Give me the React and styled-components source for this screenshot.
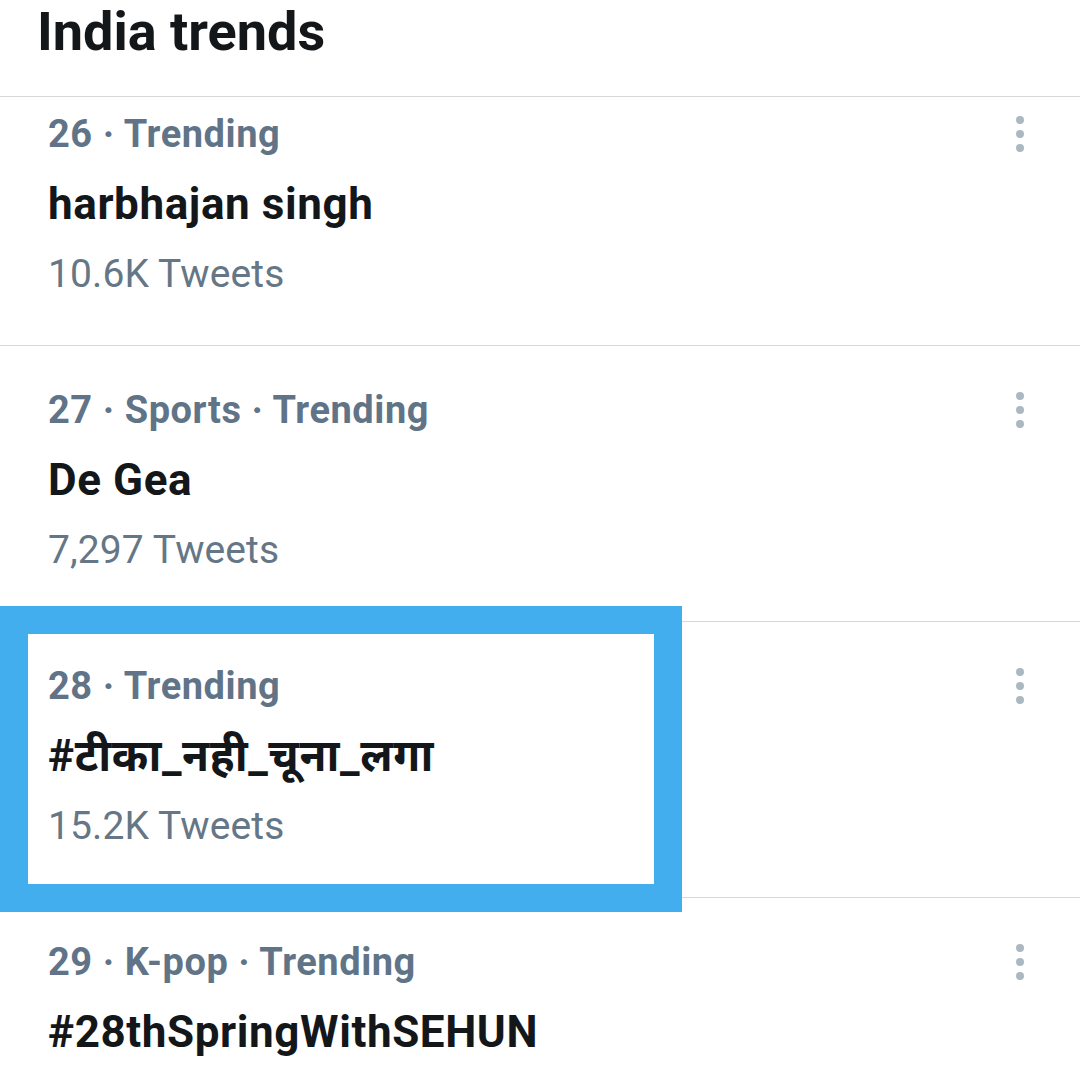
import React from 'react';
import styled, {createGlobalStyle} from 'styled-components';

const GlobalStyle = createGlobalStyle`
  html, body {
    margin: 0;
    padding: 0;
    background: #ffffff;
  }
  body {
    font-family: Roboto, "Noto Sans Devanagari", "Noto Sans", sans-serif;
    -webkit-font-smoothing: antialiased;
  }
`;

const Page = styled.div`
  width: 1080px;
  height: 1080px;
  overflow: hidden;
  background: #ffffff;
`;

const Header = styled.div`
  height: 97px;
  padding-left: 37px;
  border-bottom: 1px solid #d6d9db;
  box-sizing: border-box;
`;

const Title = styled.h1`
  margin: 0;
  font-size: 54px;
  line-height: 63px;
  font-weight: 700;
  color: #14171a;
`;

const Row = styled.div`
  position: relative;
  display: flex;
  justify-content: space-between;
  padding: ${p => (p.first ? '2px' : '29px')} 40px 36px 48px;
  border-bottom: 1px solid #d6d9db;
`;

const Body = styled.div`
  display: flex;
  flex-direction: column;
`;

const Meta = styled.div`
  font-size: 38px;
  line-height: 70px;
  font-weight: 700;
  letter-spacing: 0.55px;
  color: #617487;
`;

const Name = styled.div`
  font-size: 44px;
  line-height: 70px;
  font-weight: 700;
  letter-spacing: 0.6px;
  color: #14171a;
`;

const Count = styled.div`
  font-size: 39px;
  line-height: 70px;
  font-weight: 400;
  letter-spacing: 0.1px;
  color: #657786;
`;

const Kebab = styled.div`
  height: 70px;
  width: 40px;
  display: flex;
  flex-direction: column;
  align-items: center;
  justify-content: center;
  gap: 6px;
`;

const Dot = styled.span`
  width: 8px;
  height: 8px;
  border-radius: 50%;
  background: #aab8c2;
`;

const Highlight = styled.div`
  position: absolute;
  left: 0;
  top: -16px;
  width: 682px;
  height: 306px;
  box-sizing: border-box;
  border: 28px solid #42aeee;
  pointer-events: none;
`;

const trends = [
  {meta: '26 · Trending', name: 'harbhajan singh', count: '10.6K Tweets'},
  {meta: '27 · Sports · Trending', name: 'De Gea', count: '7,297 Tweets'},
  {meta: '28 · Trending', name: '#टीका_नही_चूना_लगा', count: '15.2K Tweets', marked: true},
  {meta: '29 · K-pop · Trending', name: '#28thSpringWithSEHUN'},
];

const App = () => (
  <Page>
    <GlobalStyle />
    <Header>
      <Title>India trends</Title>
    </Header>
    {trends.map((trend, i) => (
      <Row key={trend.meta} first={i === 0}>
        <Body>
          <Meta>{trend.meta}</Meta>
          <Name>{trend.name}</Name>
          {trend.count && <Count>{trend.count}</Count>}
        </Body>
        <Kebab>
          <Dot />
          <Dot />
          <Dot />
        </Kebab>
        {trend.marked && <Highlight />}
      </Row>
    ))}
  </Page>
);

export default App;
